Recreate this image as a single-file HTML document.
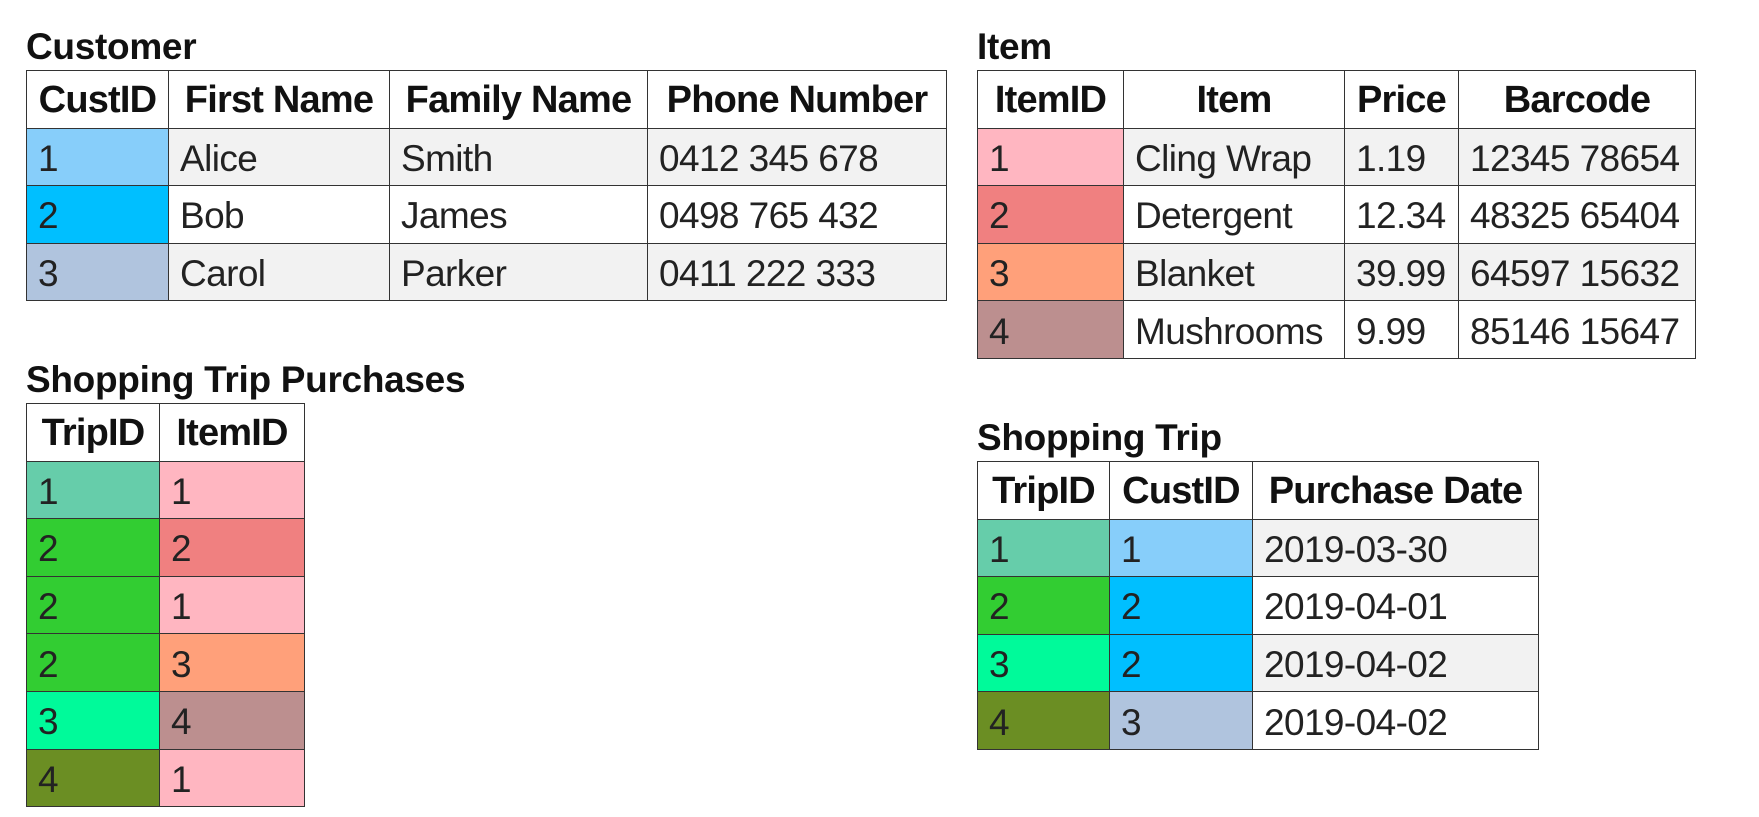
<!DOCTYPE html>
<html><head><meta charset="utf-8"><style>
html,body{margin:0;padding:0;background:#fff;width:1759px;height:817px;overflow:hidden;}
.t{position:absolute;font-family:"Liberation Sans",sans-serif;font-weight:bold;font-size:37px;color:#111;letter-spacing:-0.3px;line-height:1;}
table{position:absolute;border-collapse:collapse;font-family:"Liberation Sans",sans-serif;table-layout:fixed;}
td{border:1.5px solid #333;height:57.6px;padding:4px 0 0 11px;font-size:37px;color:#222;white-space:nowrap;overflow:hidden;letter-spacing:-0.6px;box-sizing:border-box;}
th{border:1.5px solid #333;height:57.6px;padding:2px 2px 0;font-size:38px;color:#111;font-weight:bold;white-space:nowrap;overflow:hidden;letter-spacing:-0.8px;text-align:center;background:#fff;box-sizing:border-box;}
tr.g td{background:#f2f2f2;}
.a{background:#87cefa!important}.b{background:#00bfff!important}.c{background:#b0c4de!important}
.p1{background:#ffb6c1!important}.p2{background:#f08080!important}.p3{background:#ffa07a!important}.p4{background:#bc8f8f!important}
.t1{background:#66cdaa!important}.t2{background:#32cd32!important}.t3{background:#00fa9a!important}.t4{background:#6b8e23!important}
</style></head><body>
<div class="t" style="left:26px;top:28px">Customer</div>
<table style="left:26px;top:70px;width:921px">
<colgroup><col style="width:142px"><col style="width:221px"><col style="width:258px"><col style="width:299px"></colgroup>
<tr><th>CustID</th><th>First Name</th><th>Family Name</th><th>Phone Number</th></tr>
<tr class="g"><td class="a">1</td><td>Alice</td><td>Smith</td><td>0412 345 678</td></tr>
<tr><td class="b">2</td><td>Bob</td><td>James</td><td>0498 765 432</td></tr>
<tr class="g"><td class="c">3</td><td>Carol</td><td>Parker</td><td>0411 222 333</td></tr>
</table>

<div class="t" style="left:977px;top:28px">Item</div>
<table style="left:977px;top:70px;width:719px">
<colgroup><col style="width:146px"><col style="width:221px"><col style="width:114px"><col style="width:237px"></colgroup>
<tr><th>ItemID</th><th>Item</th><th>Price</th><th>Barcode</th></tr>
<tr class="g"><td class="p1">1</td><td>Cling Wrap</td><td>1.19</td><td>12345 78654</td></tr>
<tr><td class="p2">2</td><td>Detergent</td><td>12.34</td><td>48325 65404</td></tr>
<tr class="g"><td class="p3">3</td><td>Blanket</td><td>39.99</td><td>64597 15632</td></tr>
<tr><td class="p4">4</td><td>Mushrooms</td><td>9.99</td><td>85146 15647</td></tr>
</table>

<div class="t" style="left:26px;top:361px">Shopping Trip Purchases</div>
<table style="left:26px;top:403px;width:279px">
<colgroup><col style="width:133px"><col style="width:145px"></colgroup>
<tr><th>TripID</th><th>ItemID</th></tr>
<tr><td class="t1">1</td><td class="p1">1</td></tr>
<tr><td class="t2">2</td><td class="p2">2</td></tr>
<tr><td class="t2">2</td><td class="p1">1</td></tr>
<tr><td class="t2">2</td><td class="p3">3</td></tr>
<tr><td class="t3">3</td><td class="p4">4</td></tr>
<tr><td class="t4">4</td><td class="p1">1</td></tr>
</table>

<div class="t" style="left:977px;top:419px">Shopping Trip</div>
<table style="left:977px;top:461px;width:562px">
<colgroup><col style="width:132px"><col style="width:143px"><col style="width:286px"></colgroup>
<tr><th>TripID</th><th>CustID</th><th>Purchase Date</th></tr>
<tr class="g"><td class="t1">1</td><td class="a">1</td><td>2019-03-30</td></tr>
<tr><td class="t2">2</td><td class="b">2</td><td>2019-04-01</td></tr>
<tr class="g"><td class="t3">3</td><td class="b">2</td><td>2019-04-02</td></tr>
<tr><td class="t4">4</td><td class="c">3</td><td>2019-04-02</td></tr>
</table>
</body></html>
